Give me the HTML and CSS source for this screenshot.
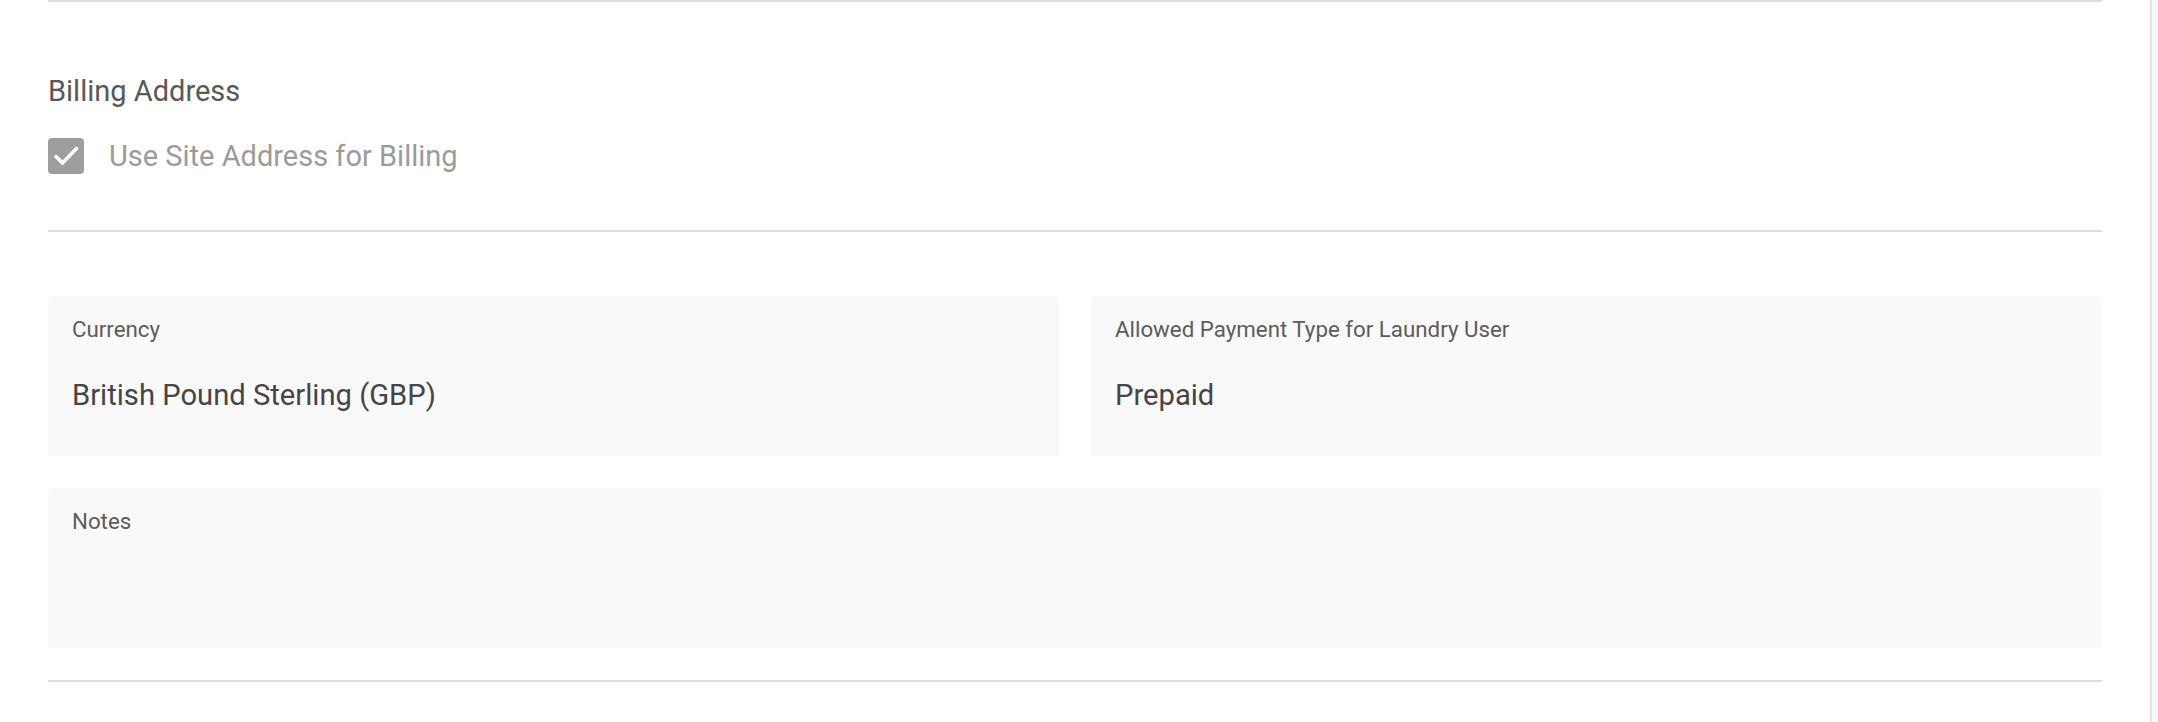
FILE: index.html
```html
<!DOCTYPE html>
<html lang="en">
<head>
<meta charset="utf-8">
<title>Billing</title>
<link rel="stylesheet" href="styles.css">
</head>
<body>
<div class="page">
  <main class="content">
    <div class="divider"></div>
    <section class="billing">
      <h2 class="section-title">Billing Address</h2>
      <label class="check-row">
        <span class="checkbox">
          <svg viewBox="0 0 36 36" width="36" height="36" aria-hidden="true">
            <path d="M8 18.5 L14.5 25 L28.5 10.5" fill="none" stroke="#ffffff" stroke-width="3.6" stroke-linecap="round" stroke-linejoin="round"/>
          </svg>
        </span>
        <span class="check-label">Use Site Address for Billing</span>
      </label>
    </section>
    <div class="divider"></div>
    <section class="fields">
      <div class="field-grid">
        <div class="field">
          <div class="field-label">Currency</div>
          <div class="field-value">British Pound Sterling (GBP)</div>
        </div>
        <div class="field">
          <div class="field-label">Allowed Payment Type for Laundry User</div>
          <div class="field-value">Prepaid</div>
        </div>
        <div class="field field-wide">
          <div class="field-label">Notes</div>
          <div class="field-value"></div>
        </div>
      </div>
    </section>
    <div class="divider"></div>
  </main>
  <div class="scrollbar"></div>
</div>
</body>
</html>
```

FILE: styles.css
```css
html, body {
  margin: 0;
  padding: 0;
  background: #ffffff;
}

body {
  font-family: Roboto, "Liberation Sans", Arial, sans-serif;
  color: #555555;
}

.page {
  display: flex;
  height: 722px;
  overflow: hidden;
}

.content {
  width: 2150px;
  box-sizing: border-box;
  padding: 0 48px;
  display: flex;
  flex-direction: column;
}

.divider {
  height: 2px;
  background: #dedede;
  flex: none;
}

.scrollbar {
  width: 8px;
  flex: none;
  box-sizing: border-box;
  border-left: 2px solid #e4e4e4;
  background: #f8f8f8;
}

.billing {
  padding: 72px 0 56px;
}

.section-title {
  margin: 0;
  font-size: 29px;
  line-height: 34px;
  font-weight: 400;
  color: #585858;
}

.check-row {
  display: flex;
  align-items: center;
  gap: 25px;
  margin-top: 30px;
  height: 36px;
}

.checkbox {
  width: 36px;
  height: 36px;
  border-radius: 4px;
  background: #9e9e9e;
  display: flex;
  flex: none;
}

.check-label {
  font-size: 29px;
  line-height: 34px;
  color: #9b9b9b;
}

.fields {
  padding: 64px 0 32px;
}

.field-grid {
  display: grid;
  grid-template-columns: 1fr 1fr;
  column-gap: 32px;
  row-gap: 32px;
}

.field {
  background: #f9f9f9;
  border-radius: 6px 6px 0 0;
  height: 160px;
  box-sizing: border-box;
  padding: 20px 24px 0;
}

.field-wide {
  grid-column: 1 / -1;
}

.field-label {
  font-size: 22.3px;
  line-height: 26px;
  color: #5c5c5c;
}

.field-value {
  margin-top: 36px;
  font-size: 29.2px;
  line-height: 34px;
  color: #454545;
}
```
